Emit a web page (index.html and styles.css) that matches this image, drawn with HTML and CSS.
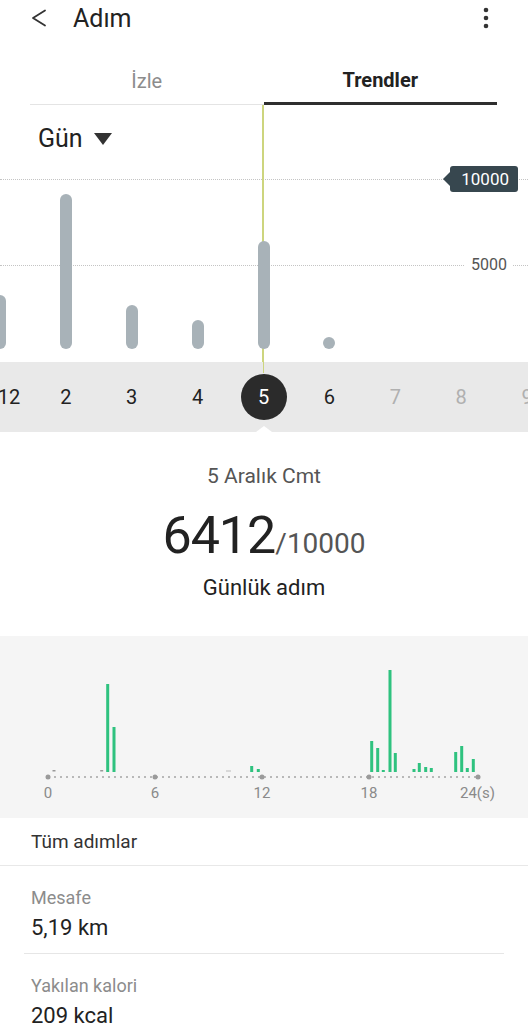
FILE: index.html
```html
<!DOCTYPE html>
<html lang="tr">
<head>
    <meta charset="UTF-8">
    <meta name="viewport" content="width=device-width, initial-scale=1.0">
    <title>Adım</title>
    <link rel="stylesheet" href="styles.css">
</head>
<body>
    <div class="appbar">
        <svg class="back" viewBox="0 0 16 20"><path d="M14 2.5 L2 10 L14 17.5" fill="none" stroke="#333" stroke-width="1.8" stroke-linecap="round" stroke-linejoin="round"/></svg>
        <h1 class="title">Adım</h1>
        <svg class="more" viewBox="0 0 6 22"><circle cx="3" cy="3" r="2.3" fill="#333"/><circle cx="3" cy="11" r="2.3" fill="#333"/><circle cx="3" cy="19" r="2.3" fill="#333"/></svg>
    </div>

    <div class="tabs">
        <div class="tab">İzle</div>
        <div class="tab active">Trendler</div>
    </div>

    <!-- gunluk trend grafigi -->
    <section class="trend">
        <div class="period">Gün <span class="caret"></span></div>
        <div class="gridline goal"></div>
        <div class="goal-tag">10000</div>
        <div class="gridline half"></div>
        <div class="half-label">5000</div>
        <div class="marker"></div>
        <div class="bars">
            <div class="col"><div class="bar" style="height:54px"></div></div>
            <div class="col"><div class="bar" style="height:155px"></div></div>
            <div class="col"><div class="bar" style="height:44px"></div></div>
            <div class="col"><div class="bar" style="height:29px"></div></div>
            <div class="col"><div class="bar" style="height:108px"></div></div>
            <div class="col"><div class="bar" style="height:12px"></div></div>
            <div class="col"></div>
            <div class="col"></div>
            <div class="col"></div>
        </div>
    </section>

    <div class="days">
        <div class="day"><span class="edge">12</span></div>
        <div class="day">2</div>
        <div class="day">3</div>
        <div class="day">4</div>
        <div class="day active"><span>5</span></div>
        <div class="day">6</div>
        <div class="day future">7</div>
        <div class="day future">8</div>
        <div class="day future">9</div>
    </div>

    <div class="summary">
        <div class="date">5 Aralık Cmt</div>
        <div class="count">6412<span class="target">/10000</span></div>
        <div class="count-label">Günlük adım</div>
    </div>

    <!-- saatlik dagilim -->
    <div class="hourly">
        <svg class="hourly-chart" width="528" height="182" viewBox="0 0 528 182">
            <line x1="48" y1="141" x2="478" y2="141" stroke="#b8b8b8" stroke-width="2" stroke-dasharray="2 4"/>
            <rect x="52.5" y="134" width="3" height="1.5" fill="#999"/>
            <rect x="100.2" y="134" width="3" height="1.5" fill="#999"/>
            <rect x="226" y="134.5" width="5" height="1" fill="#bbb"/>
            <g fill="#2fc27f">
                <rect x="106.2" y="48" width="3" height="88"/>
                <rect x="112.5" y="91" width="3" height="45"/>
                <rect x="250.2" y="130" width="3" height="6"/>
                <rect x="256.8" y="133" width="3" height="3"/>
                <rect x="370.2" y="105" width="3" height="31"/>
                <rect x="376.2" y="112" width="3" height="24"/>
                <rect x="381.8" y="134" width="3" height="2"/>
                <rect x="388.5" y="34" width="3" height="102"/>
                <rect x="393.8" y="117" width="3" height="19"/>
                <rect x="412.5" y="133" width="3" height="3"/>
                <rect x="417.8" y="127" width="3" height="9"/>
                <rect x="424.2" y="131" width="3" height="5"/>
                <rect x="429.8" y="132" width="3" height="4"/>
                <rect x="454.2" y="116" width="3" height="20"/>
                <rect x="460.2" y="110" width="3" height="26"/>
                <rect x="465.8" y="132" width="3" height="4"/>
                <rect x="471.8" y="123" width="3" height="13"/>
            </g>
            <g fill="#9a9a9a">
                <circle cx="48" cy="141" r="2.5"/>
                <circle cx="155" cy="141" r="2.5"/>
                <circle cx="262" cy="141" r="2.5"/>
                <circle cx="369" cy="141" r="2.5"/>
                <circle cx="478" cy="141" r="2.5"/>
            </g>
            <g class="hour-labels" text-anchor="middle">
                <text x="48" y="162">0</text>
                <text x="155" y="162">6</text>
                <text x="262" y="162">12</text>
                <text x="369" y="162">18</text>
                <text x="460" y="162" text-anchor="start">24(s)</text>
            </g>
        </svg>
    </div>

    <div class="all-steps">Tüm adımlar</div>

    <div class="stats">
        <div class="stat">
            <div class="stat-label">Mesafe</div>
            <div class="stat-value">5,19 km</div>
        </div>
        <div class="stat">
            <div class="stat-label">Yakılan kalori</div>
            <div class="stat-value">209 kcal</div>
        </div>
    </div>
</body>
</html>
```

FILE: styles.css
```css
body {
    margin: 0;
    width: 528px;
    overflow-x: hidden;
    font-family: Roboto, "Noto Sans", sans-serif;
    background: #ffffff;
    color: #222;
}

.appbar {
    display: flex;
    align-items: center;
    height: 36px;
    padding-left: 31px;
}

.back {
    width: 16px;
    height: 20px;
}

.title {
    flex: 1;
    margin: 0 0 0 26px;
    font-size: 25px;
    font-weight: 400;
    color: #222;
}

.more {
    width: 6px;
    height: 22px;
    margin-right: 39px;
}

.tabs {
    display: flex;
    align-items: flex-end;
    margin: 24px 31px 0 30px;
}

.tab {
    flex: 1;
    text-align: center;
    font-size: 20px;
    line-height: 40px;
    color: #8c8c8c;
    padding-bottom: 3px;
    border-bottom: 1px solid #e4e4e4;
}

.tab.active {
    color: #222;
    font-weight: 700;
    padding-bottom: 2px;
    border-bottom: 3px solid #2e2e2e;
}

.trend {
    position: relative;
    height: 257px;
    overflow: hidden;
    display: flex;
    flex-direction: column;
    padding-bottom: 13px;
    box-sizing: border-box;
}

.period {
    display: flex;
    align-items: center;
    gap: 11px;
    padding: 19px 0 0 38px;
    font-size: 25px;
    line-height: 30px;
    color: #222;
}

.caret {
    border-left: 9px solid transparent;
    border-right: 9px solid transparent;
    border-top: 12px solid #333;
}

.gridline {
    position: absolute;
    left: 0;
    right: 0;
    border-top: 1px dotted #c4c4c4;
}

.gridline.goal {
    top: 74px;
}

.gridline.half {
    top: 160px;
}

.goal-tag {
    position: absolute;
    top: 61px;
    right: 10px;
    height: 26px;
    line-height: 26px;
    padding: 0 9px 0 11px;
    background: #37474f;
    color: #ffffff;
    font-size: 17px;
    border-radius: 3px;
}

.goal-tag::before {
    content: "";
    position: absolute;
    left: -7px;
    top: 6px;
    border-top: 7px solid transparent;
    border-bottom: 7px solid transparent;
    border-right: 7px solid #37474f;
}

.half-label {
    position: absolute;
    top: 150px;
    right: 15px;
    padding: 0 6px;
    background: #ffffff;
    font-size: 16px;
    line-height: 20px;
    color: #555;
}

.marker {
    position: absolute;
    left: 262px;
    top: 0;
    bottom: 0;
    width: 1.5px;
    background: #cdd57e;
}

.bars {
    position: relative;
    flex: 1;
    display: flex;
    align-items: flex-end;
    margin-left: -33px;
}

.col {
    flex: 0 0 65.9px;
    display: flex;
    justify-content: center;
}

.bar {
    width: 12px;
    border-radius: 6px;
    background: #a8b2b8;
}

.days {
    display: flex;
    height: 70px;
    margin-left: -33px;
    background: #e9e9e9;
}

.day {
    position: relative;
    flex: 0 0 65.9px;
    display: flex;
    align-items: center;
    justify-content: center;
    font-size: 20px;
    color: #222;
}

.day .edge {
    padding-left: 18px;
}

.day.future {
    color: #b0b0b0;
}

.day.active span {
    display: flex;
    align-items: center;
    justify-content: center;
    width: 46px;
    height: 46px;
    border-radius: 50%;
    background: #2b2b2b;
    color: #ffffff;
}

.day.active::before {
    content: "";
    position: absolute;
    top: 0;
    left: 50%;
    margin-left: -1px;
    width: 1.5px;
    height: 11px;
    background: #cdd57e;
}

.day.active::after {
    content: "";
    position: absolute;
    bottom: 0;
    left: 50%;
    margin-left: -8px;
    border-left: 8px solid transparent;
    border-right: 8px solid transparent;
    border-bottom: 6px solid #ffffff;
}

.summary {
    height: 204px;
    box-sizing: border-box;
    padding-top: 31px;
    text-align: center;
}

.date {
    font-size: 21px;
    line-height: 26px;
    color: #555;
}

.count {
    margin-top: 17px;
    font-size: 52px;
    line-height: 60px;
    letter-spacing: -1px;
    color: #222;
}

.target {
    font-size: 28px;
    line-height: 1;
    letter-spacing: 0;
    color: #555;
}

.count-label {
    margin-top: 8px;
    font-size: 22px;
    line-height: 28px;
    color: #222;
}

.hourly {
    height: 182px;
    background: #f5f5f5;
}

.hourly-chart {
    display: block;
}

.hour-labels text {
    font-family: Roboto, sans-serif;
    font-size: 15px;
    fill: #8a8a8a;
}

.all-steps {
    height: 47px;
    line-height: 47px;
    padding-left: 31px;
    font-size: 19px;
    color: #333;
    border-bottom: 1px solid #e8e8e8;
}

.stats {
    margin: 0 24px;
}

.stat {
    padding: 20px 7px 11px;
    border-bottom: 1px solid #e6e6e6;
}

.stat-label {
    font-size: 18px;
    line-height: 24px;
    color: #8c8c8c;
}

.stat-value {
    margin-top: 4px;
    font-size: 22px;
    line-height: 28px;
    color: #222;
}
```
